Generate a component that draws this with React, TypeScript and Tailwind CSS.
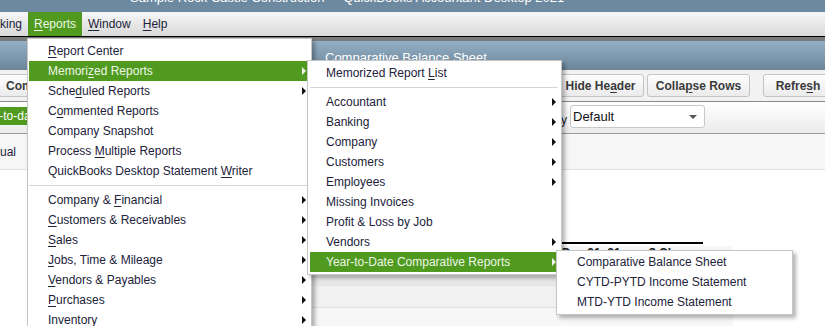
import React from 'react';

type MenuItem =
  | { label: string; u?: number; arrow?: boolean; active?: boolean }
  | 'sep';

const reportsMenu: MenuItem[] = [
  { label: 'Report Center', u: 0 },
  { label: 'Memorized Reports', u: 6, arrow: true, active: true },
  { label: 'Scheduled Reports', u: 4, arrow: true },
  { label: 'Commented Reports', u: 1 },
  { label: 'Company Snapshot' },
  { label: 'Process Multiple Reports', u: 8 },
  { label: 'QuickBooks Desktop Statement Writer', u: 29 },
  'sep',
  { label: 'Company & Financial', u: 10, arrow: true },
  { label: 'Customers & Receivables', u: 0, arrow: true },
  { label: 'Sales', u: 0, arrow: true },
  { label: 'Jobs, Time & Mileage', u: 0, arrow: true },
  { label: 'Vendors & Payables', u: 0, arrow: true },
  { label: 'Purchases', u: 0, arrow: true },
  { label: 'Inventory', arrow: true },
];

const memorizedMenu: MenuItem[] = [
  { label: 'Memorized Report List', u: 17 },
  'sep',
  { label: 'Accountant', arrow: true },
  { label: 'Banking', arrow: true },
  { label: 'Company', arrow: true },
  { label: 'Customers', arrow: true },
  { label: 'Employees', arrow: true },
  { label: 'Missing Invoices' },
  { label: 'Profit & Loss by Job' },
  { label: 'Vendors', arrow: true },
  { label: 'Year-to-Date Comparative Reports', arrow: true, active: true },
];

const ytdMenu: MenuItem[] = [
  { label: 'Comparative Balance Sheet' },
  { label: 'CYTD-PYTD Income Statement' },
  { label: 'MTD-YTD Income Statement' },
];

const Label = ({ text, u }: { text: string; u?: number }) => {
  if (u === undefined) return <>{text}</>;
  return (
    <>
      {text.slice(0, u)}
      <span className="underline underline-offset-[2px]">{text[u]}</span>
      {text.slice(u + 1)}
    </>
  );
};

const Menu = ({
  items,
  className,
  rowClass,
}: {
  items: MenuItem[];
  className: string;
  rowClass: string;
}) => {
  return (
    <div
      className={`absolute bg-white border border-[#c6c6c6] shadow-[3px_3px_4px_rgba(0,0,0,0.3)] text-[12px] ${className}`}
    >
      {items.map((item, i) =>
        item === 'sep' ? (
          <div key={i} className="h-[9px] flex items-center">
            <div className="h-px w-full bg-[#d4d4d4]" />
          </div>
        ) : (
          <div
            key={i}
            className={`h-[20px] flex items-center justify-between whitespace-nowrap ${rowClass} ${
              item.active ? 'bg-[#4f9a1f] text-[#eef7e6]' : 'text-[#22223a]'
            }`}
          >
            <span>
              <Label text={item.label} u={item.u} />
            </span>
            {item.arrow && (
              <span
                className={`w-0 h-0 border-y-[4px] border-y-transparent border-l-[4px] ${
                  item.active ? 'border-l-[#f0f0f0]' : 'border-l-[#111]'
                }`}
              />
            )}
          </div>
        )
      )}
    </div>
  );
};

const ToolButton = ({ text, u, className = '' }: { text: string; u?: number; className?: string }) => (
  <div
    className={`h-[23px] flex items-center justify-center whitespace-nowrap rounded-[3px] border border-[#c4c4c4] bg-linear-to-b from-[#fefefe] to-[#ebebeb] text-[12px] font-bold text-[#3a3a3a] ${className}`}
  >
    <Label text={text} u={u} />
  </div>
);

export default function App() {
  return (
    <div className="relative w-[825px] h-[326px] overflow-hidden bg-white font-['Liberation_Sans',Arial,sans-serif] text-[#22223a]">
      {/* window title */}
      <div className="h-[12px] overflow-hidden bg-[#6d899f]">
        <div className="pl-[130px] -mt-[9px] whitespace-nowrap text-[13px] leading-[13px] text-white">
          Sample Rock Castle Construction&nbsp; - &nbsp;QuickBooks Accountant Desktop 2021
        </div>
      </div>

      {/* menu bar */}
      <div className="flex h-[25px] border-b border-black bg-linear-to-b from-[#f6f6f6] to-[#d9d9d9] text-[12px]">
        <div className="w-[28px] overflow-hidden flex justify-end items-center pr-[6px] whitespace-nowrap">
          Banking
        </div>
        <div className="flex items-center px-[6px] bg-[#4f9a1f] text-[#eef7e6]">
          <Label text="Reports" u={0} />
        </div>
        <div className="flex items-center px-[6px]">
          <Label text="Window" u={0} />
        </div>
        <div className="flex items-center px-[6px]">
          <Label text="Help" u={0} />
        </div>
      </div>
      <div className="h-[4px] bg-[#7b7b7b]" />

      {/* report window title */}
      <div className="h-[29px] bg-linear-to-b from-[#95afc4] to-[#6b869b] pl-[325px] pt-[9px] text-[13px] leading-[15px] text-white">
        Comparative Balance Sheet
      </div>

      {/* toolbar */}
      <div className="flex items-start h-[32px] pt-[4px] border-b border-[#8a8a8a] bg-[#f2f2f2]">
        <ToolButton text="Comment on Report" className="-ml-[2px] px-[7px]" />
        <div className="flex-1" />
        <ToolButton text="Hide Header" u={7} className="w-[87px]" />
        <ToolButton text="Collapse Rows" u={5} className="ml-[3px] w-[103px]" />
        <ToolButton text="Refresh" u={5} className="ml-[13px] w-[70px] -mr-[8px]" />
      </div>

      {/* filter row */}
      <div className="flex items-start h-[32px] border-b border-[#9c9c9c] bg-linear-to-b from-white to-[#ebebeb]">
        <div className="mt-[5px] h-[18px] w-[100px] overflow-hidden whitespace-nowrap flex items-center bg-[#4f9a1f] text-[12px] text-white">
          <span className="-ml-[25px]">Year-to-date</span>
        </div>
        <div className="flex-1" />
        <div className="mt-[9px] text-[12px] text-[#222]">Sort By</div>
        <div className="ml-[3px] mt-[3px] mr-[120px] w-[135px] h-[23px] flex items-center justify-between rounded-[3px] border border-[#c8c8c8] bg-white pl-[2px] pr-[7px] text-[13px] text-[#111]">
          <span>Default</span>
          <span className="w-0 h-0 border-x-[4px] border-x-transparent border-t-[4px] border-t-[#555]" />
        </div>
      </div>

      {/* basis row */}
      <div className="flex items-center h-[36px] border-b border-[#e2e2e2] bg-[#f6f6f6] text-[12px] overflow-hidden whitespace-nowrap">
        <span className="-ml-[24px]">Accrual</span>
      </div>

      {/* report body */}
      <div className="flex flex-col">
        <div className="h-[72px]" />
        <div className="ml-[562px] w-[141px] h-[2px] bg-black" />
        <div className="h-[2px]" />
        <div className="ml-[300px] w-[433px] h-[90px] flex flex-col bg-[#f7f7f7]">
          <div className="h-[30px] flex pl-[262px] pr-[30px] pt-[1px] justify-between text-[12px] font-bold leading-[12px] text-[#222]">
            <span>Dec 31, 21</span>
            <span>$ Change</span>
          </div>
          <div className="h-[10px] bg-[#e7e7e7]" />
          <div className="h-[22px] border-b border-[#e0e0e0] bg-[#f1f1f1]" />
        </div>
      </div>

      {/* open menus */}
      <Menu
        items={reportsMenu}
        className="left-[27px] top-[38px] w-[285px] h-[300px] pt-[2px] pl-[1px] pr-[4px]"
        rowClass="pl-[19px] pr-[1px]"
      />
      <Menu
        items={memorizedMenu}
        className="left-[307px] top-[60px] w-[255px] pt-[2px] pb-[2px] pl-[2px] pr-[3px]"
        rowClass="pl-[16px] pr-[2px]"
      />
      <Menu
        items={ytdMenu}
        className="left-[556px] top-[250px] w-[237px] pt-[1px] pb-[2px] pl-[2px] pr-[3px]"
        rowClass="pl-[18px] pr-[2px]"
      />
    </div>
  );
}
